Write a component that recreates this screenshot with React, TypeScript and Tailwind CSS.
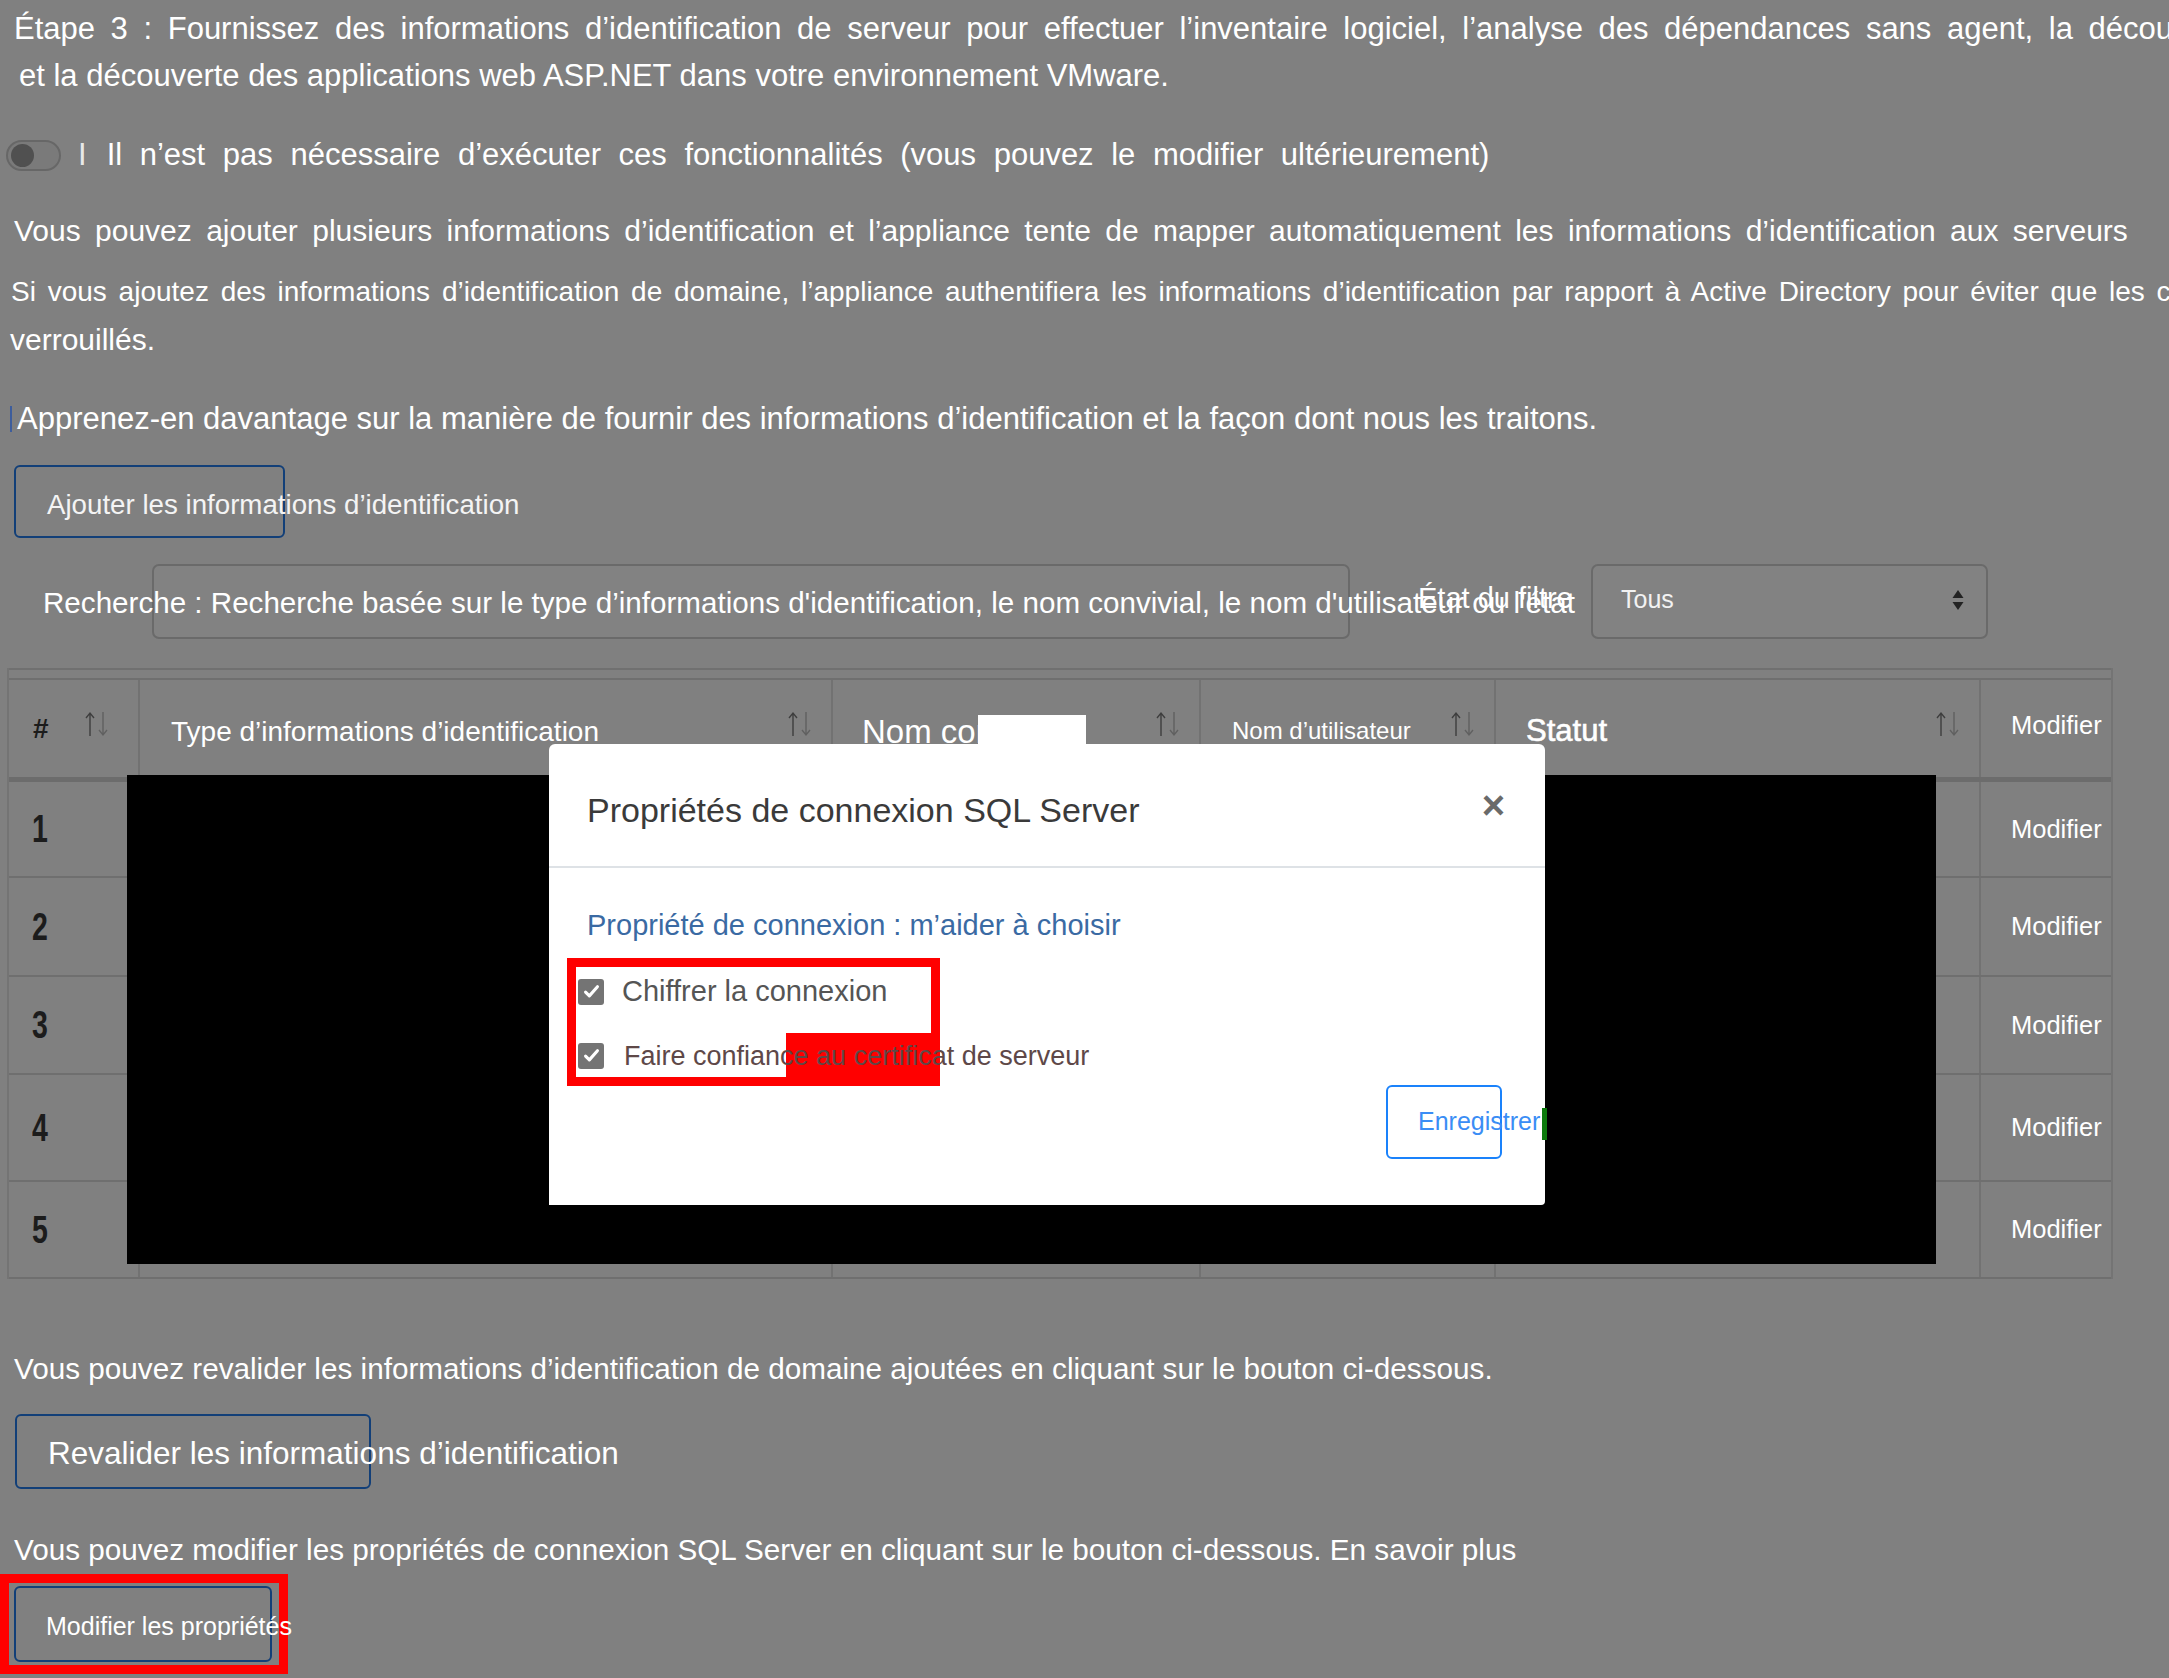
import React from "react";

const SortArrows = () => (
  <svg viewBox="0 0 26 28" className="w-[26px] h-[28px] shrink-0">
    <path d="M6 26V3M2 8l4-5 4 5" fill="none" stroke="#3e3e3e" strokeWidth="1.4" />
    <path d="M19 2v23M15 20l4 5 4-5" fill="none" stroke="#606060" strokeWidth="1.4" />
  </svg>
);

const rows = [
  { n: "1", h: "h-[94px]" },
  { n: "2", h: "h-[97px]" },
  { n: "3", h: "h-[96px]" },
  { n: "4", h: "h-[105px]" },
  { n: "5", h: "h-[95px]" },
];

const CheckBox = () => (
  <span className="flex items-center justify-center w-[26px] h-[26px] rounded-[3px] bg-[#747474] shrink-0">
    <svg viewBox="0 0 16 16" className="w-[19px] h-[19px]">
      <path d="M3 8.5l3.2 3.2L13 4" fill="none" stroke="#fff" strokeWidth="2.6" strokeLinecap="round" strokeLinejoin="round" />
    </svg>
  </span>
);

export default function App() {
  return (
    <div className="relative w-[2169px] h-[1678px] overflow-hidden bg-[#808080] text-white font-['Liberation_Sans',Arial,sans-serif]">
      <div className="flex flex-col">
        {/* intro */}
        <div className="h-[52px] pl-[14px] pt-[6px] flex items-center whitespace-nowrap text-[31px] [word-spacing:7px]">
          Étape 3 : Fournissez des informations d’identification de serveur pour effectuer l’inventaire logiciel, l’analyse des dépendances sans agent, la découverte des instances et bases de données SQL Server
        </div>
        <div className="h-[50px] pl-[19px] -mt-[1px] flex items-center whitespace-nowrap text-[31px]">
          et la découverte des applications web ASP.NET dans votre environnement VMware.
        </div>

        <div className="mt-[29px] h-[50px] pl-[6px] flex items-center whitespace-nowrap text-[31px]">
          <span className="flex items-center w-[55px] h-[31px] rounded-full border-2 border-[#676767] bg-[#7a7a7a] px-[3px]">
            <span className="w-[23px] h-[23px] rounded-full bg-[#505050]" />
          </span>
          <span className="ml-[17px] text-[#e8e8e8]">I</span>
          <span className="ml-[20px] [word-spacing:9px]">Il n’est pas nécessaire d’exécuter ces fonctionnalités (vous pouvez le modifier ultérieurement)</span>
        </div>

        <div className="mt-[25px] h-[50px] pl-[14px] flex items-center whitespace-nowrap text-[30px] [word-spacing:6px]">
          Vous pouvez ajouter plusieurs informations d’identification et l’appliance tente de mapper automatiquement les informations d’identification aux serveurs
        </div>
        <div className="mt-[15px] h-[44px] pl-[11px] flex items-center whitespace-nowrap text-[28px] [word-spacing:4px]">
          Si vous ajoutez des informations d’identification de domaine, l’appliance authentifiera les informations d’identification par rapport à Active Directory pour éviter que les comptes ne soient
        </div>
        <div className="h-[50px] pl-[10px] flex items-center whitespace-nowrap text-[30px]">verrouillés.</div>

        <div className="mt-[30px] h-[50px] pl-[10px] flex items-center whitespace-nowrap text-[31px]">
          <span className="w-[2px] h-[26px] bg-[#3d5d9c] mr-[5px]" />
          Apprenez-en davantage sur la manière de fournir des informations d’identification et la façon dont nous les traitons.
        </div>

        <div className="mt-[21px] ml-[14px] w-[271px] h-[73px] rounded-[6px] border-2 border-[#123f78] flex items-center pl-[31px] pt-[6px] whitespace-nowrap text-[27.7px] text-[#f4f4f4]">
          Ajouter les informations d’identification
        </div>

        {/* search row */}
        <div className="relative mt-[26px] h-[75px] flex">
          <div className="ml-[152px] w-[1198px] h-[75px] rounded-[7px] border-2 border-[#6a6a6a] bg-[#828282]" />
          <div className="ml-[241px] w-[397px] h-[75px] rounded-[7px] border-2 border-[#6a6a6a] bg-[#828282] flex items-center justify-between pl-[28px] pr-[22px]">
            <span className="text-[25px] text-[#f2f2f2] -mt-[4px]">Tous</span>
            <svg viewBox="0 0 12 22" className="w-[12px] h-[22px] -mt-[4px]">
              <path d="M6 1L11.5 9H0.5z" fill="#222" />
              <path d="M6 21L11.5 13H0.5z" fill="#222" />
            </svg>
          </div>
          <div className="absolute left-[43px] top-[22px] whitespace-nowrap text-[29.6px] leading-[34px]">
            Recherche : Recherche basée sur le type d’informations d'identification, le nom convivial, le nom d'utilisateur ou l'état
          </div>
          <div className="absolute left-[1418px] top-[17px] whitespace-nowrap text-[29px] leading-[34px]">État du filtre</div>
        </div>

        {/* table */}
        <div className="mt-[29px] ml-[7px] w-[2106px] flex flex-col border-x-2 border-[#747474]">
          <div className="border-t-2 border-[#707070] h-[10px]" />
          <div className="flex h-[99px] border-t-2 border-[#6f6f6f]">
            <div className="w-[131px] shrink-0 border-r-2 border-[#727272] flex items-center pl-[24px] gap-[35px]">
              <span className="text-[28px] font-bold text-[#1c1c1c]">#</span>
              <span className="-mt-[10px]"><SortArrows /></span>
            </div>
            <div className="w-[693px] shrink-0 border-r-2 border-[#727272] flex items-center justify-between pl-[31px] pr-[18px]">
              <span className="text-[28px] whitespace-nowrap mt-[6px]">Type d’informations d’identification</span>
              <span className="-mt-[10px]"><SortArrows /></span>
            </div>
            <div className="w-[368px] shrink-0 border-r-2 border-[#727272] flex items-center justify-between pl-[29px] pr-[18px]">
              <span className="text-[33px] whitespace-nowrap mt-[6px]">Nom convivial</span>
              <span className="-mt-[10px]"><SortArrows /></span>
            </div>
            <div className="w-[295px] shrink-0 border-r-2 border-[#727272] flex items-center justify-between pl-[31px] pr-[18px]">
              <span className="text-[24px] whitespace-nowrap mt-[4px]">Nom d’utilisateur</span>
              <span className="-mt-[10px]"><SortArrows /></span>
            </div>
            <div className="w-[485px] shrink-0 border-r-2 border-[#727272] flex items-center justify-between pl-[30px] pr-[18px]">
              <span className="text-[31px] whitespace-nowrap mt-[6px] [-webkit-text-stroke:0.6px_white]">Statut</span>
              <span className="-mt-[10px]"><SortArrows /></span>
            </div>
            <div className="flex-1 flex items-center pl-[30px]">
              <span className="text-[25.5px] -mt-[6px]">Modifier</span>
            </div>
          </div>
          <div className="h-[5px] bg-[#6c6c6c]" />
          {rows.map((r) => (
            <div key={r.n} className={`flex ${r.h} border-b-2 border-[#6f6f6f] box-content`}>
              <div className="w-[131px] shrink-0 border-r-2 border-[#727272] flex items-center pl-[23px]">
                <span className="inline-block origin-left scale-x-[0.75] text-[38px] leading-none font-bold text-[#1c1c1c]">{r.n}</span>
              </div>
              <div className="w-[693px] shrink-0 border-r-2 border-[#727272]" />
              <div className="w-[368px] shrink-0 border-r-2 border-[#727272]" />
              <div className="w-[295px] shrink-0 border-r-2 border-[#727272]" />
              <div className="w-[485px] shrink-0 border-r-2 border-[#727272]" />
              <div className="flex-1 flex items-center pl-[30px]">
                <span className="text-[25.5px]">Modifier</span>
              </div>
            </div>
          ))}
        </div>

        {/* bottom */}
        <div className="mt-[65px] h-[50px] pl-[14px] flex items-center whitespace-nowrap text-[29.7px]">
          Vous pouvez revalider les informations d’identification de domaine ajoutées en cliquant sur le bouton ci-dessous.
        </div>
        <div className="mt-[20px] ml-[15px] w-[356px] h-[75px] rounded-[6px] border-2 border-[#123f78] flex items-center pl-[31px] pt-[4px] whitespace-nowrap text-[31.5px]">
          Revalider les informations d’identification
        </div>
        <div className="mt-[36px] h-[50px] pl-[14px] flex items-center whitespace-nowrap text-[29.7px]">
          Vous pouvez modifier les propriétés de connexion SQL Server en cliquant sur le bouton ci-dessous. En savoir plus
        </div>
        <div className="-mt-[1px] w-[288px] h-[100px] border-[9px] border-[#ff0000] pl-[5px] pt-[3px]">
          <div className="w-[258px] h-[76px] rounded-[6px] border-2 border-[#123f78] flex items-center pl-[30px] pt-[6px] whitespace-nowrap text-[25px] relative">
            Modifier les propriétés
          </div>
        </div>
      </div>

      {/* redacted area */}
      <div className="absolute left-[127px] top-[775px] w-[1809px] h-[489px] bg-black" />

      {/* white patch over header label */}
      <div className="absolute left-[978px] top-[715px] w-[108px] h-[32px] bg-white" />

      {/* modal */}
      <div className="absolute left-[549px] top-[744px] w-[996px] h-[461px] bg-white rounded-t-[6px] rounded-br-[4px] flex flex-col">
        <div className="h-[124px] border-b-2 border-[#dee2e6] flex items-center justify-between pl-[38px] pr-[40px] pt-[10px]">
          <span className="text-[34px] text-[#3a3a3a] whitespace-nowrap">Propriétés de connexion SQL Server</span>
          <span className="text-[40px] leading-none text-[#6a6a6a] font-bold -mt-[10px]">×</span>
        </div>
        <div className="mt-[38px] h-[40px] pl-[38px] flex items-center text-[29px] text-[#3a6aa3] whitespace-nowrap">
          Propriété de connexion : m’aider à choisir
        </div>
        <div className="relative mt-[12px] ml-[18px] w-[373px] h-[128px] border-[9px] border-[#ff0000]">
          <div className="absolute left-[210px] top-[66px] w-[154px] h-[53px] bg-[#ff0000]" />
          <div className="relative flex items-center pl-[2px] pt-[3px] gap-[18px] whitespace-nowrap">
            <CheckBox />
            <span className="text-[29px] text-[#555]">Chiffrer la connexion</span>
          </div>
          <div className="relative flex items-center pl-[2px] mt-[22px] gap-[20px] whitespace-nowrap">
            <CheckBox />
            <span className="text-[27px] text-[#5e4848]">Faire confiance au certificat de serveur</span>
          </div>
        </div>
        <div className="flex justify-end pr-[43px] -mt-[1px]">
          <div className="w-[116px] h-[74px] rounded-[6px] border-2 border-[#1a82fb] flex items-center pl-[30px] whitespace-nowrap text-[25px] text-[#3a8df5]">
            Enregistrer
          </div>
        </div>
        <div className="absolute right-[-2px] top-[364px] w-[5px] h-[32px] bg-[#0c7a0c]" />
      </div>
    </div>
  );
}
